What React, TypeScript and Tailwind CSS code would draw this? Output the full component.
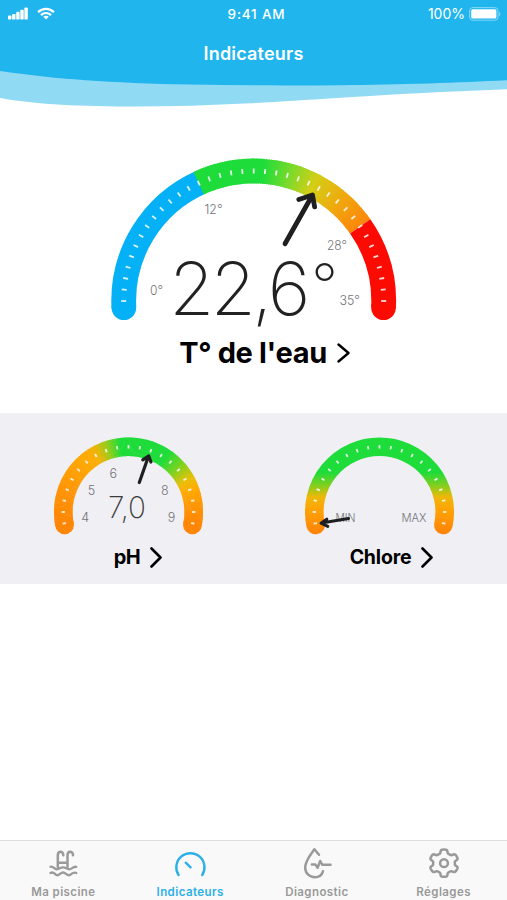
import type { ReactNode } from "react";

type Stop = [number, [number, number, number]];

/** Point on a circle; 0 is the left end, 90 the top and 180 the right end. */
function polar(cx: number, cy: number, r: number, deg: number) {
  const a = (deg * Math.PI) / 180;
  return { x: cx - r * Math.cos(a), y: cy - r * Math.sin(a) };
}

function arcPath(cx: number, cy: number, r: number, from: number, to: number) {
  const a = polar(cx, cy, r, from);
  const b = polar(cx, cy, r, to);
  return `M${a.x} ${a.y}A${r} ${r} 0 ${to - from > 180 ? 1 : 0} 1 ${b.x} ${b.y}`;
}

function colorAt(stops: Stop[], deg: number) {
  for (let i = 1; i < stops.length; i++) {
    const [d0, c0] = stops[i - 1];
    const [d1, c1] = stops[i];
    if (deg <= d1) {
      const t = Math.max(0, d1 === d0 ? 1 : (deg - d0) / (d1 - d0));
      return `rgb(${c0.map((v, k) => Math.round(v + (c1[k] - v) * t)).join(",")})`;
    }
  }
  return `rgb(${stops[stops.length - 1][1].join(",")})`;
}

function Band({ cx, cy, r, width, from, to, stops }: { cx: number; cy: number; r: number; width: number; from: number; to: number; stops: Stop[] }) {
  const segments = [];
  for (let d = from; d < to; d += 1) {
    segments.push(
      <path key={d} d={arcPath(cx, cy, r, d, Math.min(d + 1.5, to))} stroke={colorAt(stops, d + 0.5)} strokeWidth={width} fill="none" />,
    );
  }
  return <g>{segments}</g>;
}

function Ticks({ cx, cy, r, from, to, step, length, width }: { cx: number; cy: number; r: number; from: number; to: number; step: number; length: number; width: number }) {
  const lines = [];
  for (let d = from; d <= to; d += step) {
    const a = polar(cx, cy, r - length / 2, d);
    const b = polar(cx, cy, r + length / 2, d);
    lines.push(<line key={d} x1={a.x} y1={a.y} x2={b.x} y2={b.y} stroke="#fff" strokeOpacity={0.85} strokeWidth={width} />);
  }
  return <g>{lines}</g>;
}

function Label({ x, y, w, size, children }: { x: number; y: number; w?: number; size: number; children: string }) {
  return (
    <text x={x} y={y} fontSize={size} fontWeight={300} fill="#737377" textLength={w} lengthAdjust="spacingAndGlyphs">
      {children}
    </text>
  );
}

const GREEN: [number, number, number] = [30, 220, 58];
const ORANGE: [number, number, number] = [255, 134, 6];
const AMBER: [number, number, number] = [255, 172, 4];

function TemperatureGauge() {
  const c = { cx: 142.7, cy: 143, r: 130 };
  const start = polar(c.cx, c.cy, c.r, -3);
  const end = polar(c.cx, c.cy, c.r, 183);
  return (
    <svg className="block" width="286" height="182" viewBox="0 0 286 182">
      <circle cx={start.x} cy={start.y} r="12.3" fill="#04b0f6" />
      <circle cx={end.x} cy={end.y} r="12.3" fill="#fc0b03" />
      <path d={arcPath(c.cx, c.cy, c.r, -3, 66)} stroke="#04b0f6" strokeWidth="24.8" fill="none" />
      <Band {...c} width={24.8} from={65} to={145} stops={[[65, GREEN], [94, GREEN], [106, [122, 218, 44]], [117, [212, 206, 22]], [131, [240, 168, 14]], [145, [252, 134, 12]]]} />
      <path d={arcPath(c.cx, c.cy, c.r, 145, 183)} stroke="#fc0b03" strokeWidth="24.8" fill="none" />
      <Ticks {...c} from={0} to={180} step={5} length={5} width={1.8} />
      <Label x={39} y={137} w={13} size={13}>0°</Label>
      <Label x={93.5} y={56} w={18} size={13.5}>12°</Label>
      <Label x={216} y={92} w={20} size={13.5}>28°</Label>
      <Label x={228.5} y={147.3} w={20.5} size={13.5}>35°</Label>
      <path d="M174 85.8L201.2 37.5M187.8 41.5L201.5 37L203.6 48.8" stroke="#1f1f21" strokeWidth="4.8" strokeLinecap="round" strokeLinejoin="round" fill="none" />
      <text x="58.3 99.8 141.2 156.8" y="157" fontSize="73" fontWeight={200} fill="#222">
        22,6
      </text>
      <text x="200.3" y="148.3" fontSize="58.5" fontWeight={250} fill="#222">
        °
      </text>
    </svg>
  );
}

function PhGauge() {
  const c = { cx: 74.5, cy: 75, r: 65.2 };
  const start = polar(c.cx, c.cy, c.r, -11.5);
  const end = polar(c.cx, c.cy, c.r, 191.5);
  return (
    <svg className="block" width="149" height="99" viewBox="0 0 149 99">
      <circle cx={start.x} cy={start.y} r="9.3" fill="rgb(255,134,6)" />
      <circle cx={end.x} cy={end.y} r="9.3" fill="rgb(255,134,6)" />
      <Band {...c} width={18.6} from={-11.5} to={191.5} stops={[[-11.5, ORANGE], [15, [255, 146, 6]], [55, AMBER], [62, [238, 180, 8]], [72, [150, 205, 26]], [83, GREEN], [124, GREEN], [139, [130, 210, 28]], [152, [235, 190, 8]], [160, AMBER], [175, [255, 150, 6]], [191.5, ORANGE]]} />
      <Ticks {...c} from={-10} to={190} step={10} length={3.4} width={1.8} />
      <Label x={27.2} y={85.3} size={12.5}>4</Label>
      <Label x={33.7} y={58.3} size={12.5}>5</Label>
      <Label x={55.5} y={41} size={12.5}>6</Label>
      <Label x={107} y={58.3} size={12.5}>8</Label>
      <Label x={113.7} y={85.3} size={12.5}>9</Label>
      <path d="M85.3 45.5L94.3 19.8M88.8 22.8L94.8 18.9L96.9 25" stroke="#1f1f21" strokeWidth="3.2" strokeLinecap="round" strokeLinejoin="round" fill="none" />
      <text x="54" y="81" fontSize="29.5" fontWeight={200} fill="#3c3c3e" textLength="38" lengthAdjust="spacingAndGlyphs">
        7,0
      </text>
    </svg>
  );
}

function ChlorineGauge() {
  const c = { cx: 74.5, cy: 75, r: 65.2 };
  return (
    <svg className="block" width="149" height="99" viewBox="0 0 149 99">
      <defs>
        <linearGradient id="chlorine" gradientUnits="userSpaceOnUse" x1="0" y1="0" x2="0" y2="98">
          <stop offset="0.36" stopColor="#1edc3a" />
          <stop offset="0.5" stopColor="#86cf1e" />
          <stop offset="0.61" stopColor="#edb808" />
          <stop offset="0.74" stopColor="#ffa305" />
          <stop offset="1" stopColor="#ff8006" />
        </linearGradient>
      </defs>
      <path d={arcPath(c.cx, c.cy, c.r, -11.5, 191.5)} stroke="url(#chlorine)" strokeWidth="18.6" strokeLinecap="round" fill="none" />
      <Ticks {...c} from={-10} to={190} step={10} length={3.4} width={1.8} />
      <Label x={30.5} y={85} w={20} size={12}>MIN</Label>
      <Label x={96.5} y={85} w={25} size={12}>MAX</Label>
      <path d="M43.5 81.5L16.5 86M21.8 82.2L16 86.2L22.8 89.4" stroke="#1f1f21" strokeWidth="3" strokeLinecap="round" strokeLinejoin="round" fill="none" />
    </svg>
  );
}

function Chevron({ w, h, stroke }: { w: number; h: number; stroke: number }) {
  return (
    <svg width={w} height={h} viewBox={`0 0 ${w} ${h}`} fill="none" stroke="#000" strokeWidth={stroke} strokeLinecap="round" strokeLinejoin="round">
      <path d={`M1.5 1.5L${w - 1.5} ${h / 2}L1.5 ${h - 1.5}`} />
    </svg>
  );
}

/** Outline of a six-toothed cog with rounded teeth. */
function cogPath(cx: number, cy: number) {
  const points: string[] = [];
  for (let d = 0; d < 360; d += 3) {
    const wave = Math.cos((6 * (d - 90) * Math.PI) / 180);
    const r = 12.1 + 1.8 * Math.tanh(2.8 * (wave + 0.1));
    const p = polar(0, 0, r, d);
    points.push(`${(cx + p.x * 1.05).toFixed(2)} ${(cy + p.y * 0.98).toFixed(2)}`);
  }
  return `M${points.join("L")}Z`;
}

function Tab({ label, active, children }: { label: string; active?: boolean; children: ReactNode }) {
  return (
    <button className={`flex flex-1 flex-col items-center pt-[6px] ${active ? "text-[#2bb0e8]" : "text-[#9a9a9a]"}`}>
      <svg width="34" height="34" viewBox="0 0 34 34" fill="none" stroke="currentColor" strokeWidth="2.5" strokeLinecap="round" strokeLinejoin="round">
        {children}
      </svg>
      <span className="mt-[4px] text-[11.5px] leading-[15px] font-semibold tracking-[0.42px]">{label}</span>
    </button>
  );
}

export default function App() {
  return (
    <div className="flex h-[900px] w-[507px] flex-col overflow-hidden bg-white font-['Inter','Liberation_Sans',sans-serif] text-black">
      <header className="relative h-[108px] shrink-0 text-white">
        <svg className="absolute inset-0" width="507" height="108" viewBox="0 0 507 108">
          <path d="M0 0H507V89.3C460 91 410 93.5 370 96C320 99 290 101.2 250 103.2C210 105.3 170 106.6 128 106.5C70 106.3 30 103.5 0 98Z" fill="#90daf4" />
          <path d="M0 0H507V80.2C460 82.5 400 84.6 340 85.2C290 85.6 240 85.5 190 84.6C110 83 55 79 0 71Z" fill="#21b5ee" />
        </svg>
        <div className="relative flex h-[27px] items-center justify-between pr-[6px] pl-[8px]">
          <div className="flex w-[122px] items-center gap-[9px]">
            <svg width="20" height="13" viewBox="0 0 20 13" fill="#fff">
              <rect x="0" y="8.6" width="3.4" height="4" rx="0.9" />
              <rect x="4.1" y="6.9" width="3.4" height="5.7" rx="0.9" />
              <rect x="8.2" y="4.8" width="3.4" height="7.8" rx="0.9" />
              <rect x="12.3" y="2.7" width="3.4" height="9.9" rx="0.9" />
              <rect x="16.4" y="0.4" width="3.4" height="12.2" rx="0.9" />
            </svg>
            <svg width="18" height="13" viewBox="0 0 18 13" fill="none" stroke="#fff" strokeWidth="2.4">
              <path d="M1.1 5.2C5.7 0.7 12.3 0.7 16.9 5.2" />
              <path d="M4 8.1C7 5.4 11 5.4 14 8.1" />
              <path d="M9 12.6L6.2 9.8C7.8 8.4 10.2 8.4 11.8 9.8Z" fill="#fff" stroke="none" />
            </svg>
          </div>
          <span className="pt-px pl-[2px] text-[13.5px] font-medium tracking-[0.8px]">9:41 AM</span>
          <div className="flex w-[120px] items-center justify-end gap-[4px]">
            <span className="pt-px text-[14px] leading-[18px]">100%</span>
            <svg width="32" height="14" viewBox="0 0 32 14">
              <rect x="0.6" y="0.6" width="28.4" height="12.6" rx="3.2" fill="none" stroke="#fff" strokeOpacity="0.45" />
              <rect x="2.2" y="2.2" width="25.2" height="9.4" rx="1.6" fill="#fff" />
              <path d="M30.2 4.8C31.8 5.6 31.8 8.4 30.2 9.2Z" fill="#fff" fillOpacity="0.5" />
            </svg>
          </div>
        </div>
        <h1 className="relative mt-[16px] text-center text-[18px] leading-[22px] font-semibold tracking-[0.2px]">Indicateurs</h1>
      </header>

      <section className="flex h-[305px] shrink-0 flex-col items-center pt-[50px]">
        <TemperatureGauge />
        <div className="-mt-[5px] flex items-center gap-[10px] pl-[22px]">
          <span className="text-[29px] leading-[36px] font-bold tracking-[-0.35px]">T° de l'eau</span>
          <Chevron w={13} h={20} stroke={2.4} />
        </div>
      </section>

      <section className="flex h-[171px] shrink-0 bg-[#efeff4] pt-[24px]">
        <div className="flex w-[257px] shrink-0 flex-col items-center">
          <PhGauge />
          <div className="mt-[8px] flex items-center gap-[10px] pl-[19px]">
            <span className="text-[20px] leading-[26px] font-bold tracking-[-0.4px]">pH</span>
            <Chevron w={12} h={21} stroke={2.6} />
          </div>
        </div>
        <div className="flex flex-1 flex-col items-center pr-[5px]">
          <ChlorineGauge />
          <div className="mt-[8px] flex items-center gap-[10px] pl-[24px]">
            <span className="text-[19.5px] leading-[26px] font-bold tracking-[-0.2px]">Chlore</span>
            <Chevron w={12} h={21} stroke={2.6} />
          </div>
        </div>
      </section>

      <div className="flex-1" />

      <nav className="flex h-[60px] shrink-0 border-t border-[#dedede] bg-[#f9f9f9]">
        <Tab label="Ma piscine">
          <path d="M11.8 20V8.5C11.8 3.6 17.3 3.6 17.3 8.2M21.5 20V8.5C21.5 3.6 27 3.6 27 8.2M11.8 15.8H21.5" strokeWidth="2.5" />
          <path d="M4.5 19.8C7.5 19 8 22.3 10.8 22.3S14 20.3 17 20.3S20.5 22.3 23.3 22.3S26.5 19.3 30.3 19.8" strokeWidth="2.3" />
          <path d="M4.5 26C8 23.8 9 28.3 11.3 28.3S14.5 25.5 17 25.5S20.5 28.3 23 28.3S26.5 24 30.3 26" strokeWidth="2.3" />
        </Tab>
        <Tab label="Indicateurs" active>
          <path d="M5.6 28A14.1 14.1 0 1 1 29.2 28M12.7 15.7L17.6 20.3" strokeWidth="2.4" />
        </Tab>
        <Tab label="Diagnostic">
          <path d="M19 7.8L14.4 2.2C9.8 8.5 5.2 14 5.2 20.2C5.2 26.3 9.2 30.2 14.8 30.2C18.9 30.2 21.9 28 23 24.3" />
          <path d="M11.8 17.6H15.5L17.6 20.8L20.2 14L22.2 17.7H30.5" />
        </Tab>
        <Tab label="Réglages">
          <circle cx="17" cy="16.2" r="3.9" />
          <path d={cogPath(17, 16.2)} />
        </Tab>
      </nav>
    </div>
  );
}
